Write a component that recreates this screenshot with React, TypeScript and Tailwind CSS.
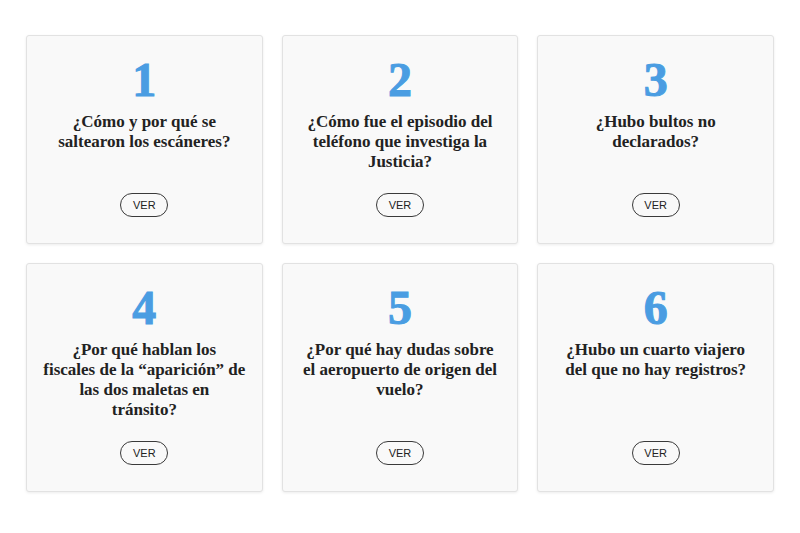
const cards = [
  { n: '1', lines: ['¿Cómo y por qué se', 'saltearon los escáneres?'] },
  { n: '2', lines: ['¿Cómo fue el episodio del', 'teléfono que investiga la', 'Justicia?'] },
  { n: '3', lines: ['¿Hubo bultos no', 'declarados?'] },
  { n: '4', lines: ['¿Por qué hablan los', 'fiscales de la “aparición” de', 'las dos maletas en', 'tránsito?'] },
  { n: '5', lines: ['¿Por qué hay dudas sobre', 'el aeropuerto de origen del', 'vuelo?'] },
  { n: '6', lines: ['¿Hubo un cuarto viajero', 'del que no hay registros?'] },
]

function Card({ n, lines }: { n: string; lines: string[] }) {
  return (
    <div className="flex flex-col items-center rounded-[3px] border border-[#e2e2e2] bg-[#f9f9f9] px-4 pb-[26px] pt-5 text-center shadow-[0_1px_3px_rgba(0,0,0,0.08)]">
      <div className="font-['Liberation_Serif',serif] text-[48px] font-bold leading-[48px] text-[#4a9de2] [-webkit-text-stroke:1px_#4a9de2]">
        {n}
      </div>
      <p className="mt-2 font-['Liberation_Serif',serif] text-[17px] font-bold leading-[20px] text-[#222]">
        {lines.map((l, i) => (
          <span key={i} className="block whitespace-nowrap">
            {l}
          </span>
        ))}
      </p>
      <div className="min-h-[21px] flex-1" />
      <button className="flex h-6 w-12 items-center justify-center rounded-full border border-[#3a3a3a] bg-transparent font-['Liberation_Sans',sans-serif] text-[11px] text-[#222]">
        VER
      </button>
    </div>
  )
}

export default function App() {
  return (
    <div className="min-h-[533px] bg-white px-[26px] pt-[35px]">
      <div className="grid grid-cols-3 gap-[19px]">
        {cards.map((c) => (
          <Card key={c.n} {...c} />
        ))}
      </div>
    </div>
  )
}
